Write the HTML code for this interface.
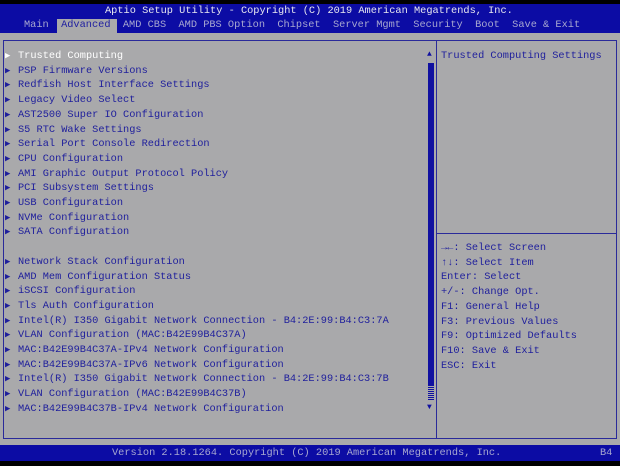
<html><head><style>
body{margin:0;width:620px;height:466px;background:#000;position:relative;overflow:hidden;font-family:"Liberation Mono",monospace;font-size:10.3px;}
.a{position:absolute;white-space:pre;line-height:14.7px;}
#top{position:absolute;left:0;top:4px;width:620px;height:29px;background:#0c0ca4;}
#body{position:absolute;left:0;top:33px;width:620px;height:412px;background:#a9a9ab;}
#bot{position:absolute;left:0;top:445px;width:620px;height:16px;background:#0c0ca4;}
.b{color:#1e1e9c}
</style></head><body>
<div id="top"></div><div id="body"></div><div id="bot"></div>
<div class="a" style="left:105px;top:4px;color:#e8e8f0">Aptio Setup Utility - Copyright (C) 2019 American Megatrends, Inc.</div>
<div style="position:absolute;left:57px;top:19px;width:60px;height:14px;background:#a9a9ab"></div>
<div class="a" style="left:24px;top:18px;color:#a8a8d0">Main  <span style="color:#2020a0">Advanced</span>  AMD CBS  AMD PBS Option  Chipset  Server Mgmt  Security  Boot  Save &amp; Exit</div>
<div style="position:absolute;left:3px;top:40px;width:612px;height:397px;border:1px solid #2a2a9a"></div>
<div style="position:absolute;left:436px;top:40px;width:1px;height:398px;background:#2a2a9a"></div>
<div style="position:absolute;left:437px;top:233px;width:179px;height:1px;background:#2a2a9a"></div>
<div style="position:absolute;left:428px;top:63px;width:6px;height:322px;background:#1010a0"></div>
<div style="position:absolute;left:428px;top:385px;width:6px;height:16px;background:repeating-linear-gradient(#1010a0 0 1px,#a9a9ab 1px 2px)"></div>
<div class="a" style="left:427px;top:48px;color:#1010a0;font-size:8px">▲</div>
<div class="a" style="left:427px;top:401px;color:#1010a0;font-size:8px">▼</div>
<div class="a b" style="left:5px;top:49px;font-size:9px"><span style="color:#fff">▶</span>
▶
▶
▶
▶
▶
▶
▶
▶
▶
▶
▶
▶

▶
▶
▶
▶
▶
▶
▶
▶
▶
▶
▶</div>
<div class="a b" style="left:18px;top:49px"><span style="color:#fff">Trusted Computing</span>
PSP Firmware Versions
Redfish Host Interface Settings
Legacy Video Select
AST2500 Super IO Configuration
S5 RTC Wake Settings
Serial Port Console Redirection
CPU Configuration
AMI Graphic Output Protocol Policy
PCI Subsystem Settings
USB Configuration
NVMe Configuration
SATA Configuration

Network Stack Configuration
AMD Mem Configuration Status
iSCSI Configuration
Tls Auth Configuration
Intel(R) I350 Gigabit Network Connection - B4:2E:99:B4:C3:7A
VLAN Configuration (MAC:B42E99B4C37A)
MAC:B42E99B4C37A-IPv4 Network Configuration
MAC:B42E99B4C37A-IPv6 Network Configuration
Intel(R) I350 Gigabit Network Connection - B4:2E:99:B4:C3:7B
VLAN Configuration (MAC:B42E99B4C37B)
MAC:B42E99B4C37B-IPv4 Network Configuration</div>
<div class="a b" style="left:441px;top:49px">Trusted Computing Settings</div>
<div class="a b" style="left:441px;top:241px">→←: Select Screen
↑↓: Select Item
Enter: Select
+/-: Change Opt.
F1: General Help
F3: Previous Values
F9: Optimized Defaults
F10: Save &amp; Exit
ESC: Exit</div>
<div class="a" style="left:112px;top:446px;color:#a8a8d0">Version 2.18.1264. Copyright (C) 2019 American Megatrends, Inc.</div>
<div class="a" style="left:600px;top:446px;color:#a8a8d0">B4</div>
</body></html>
